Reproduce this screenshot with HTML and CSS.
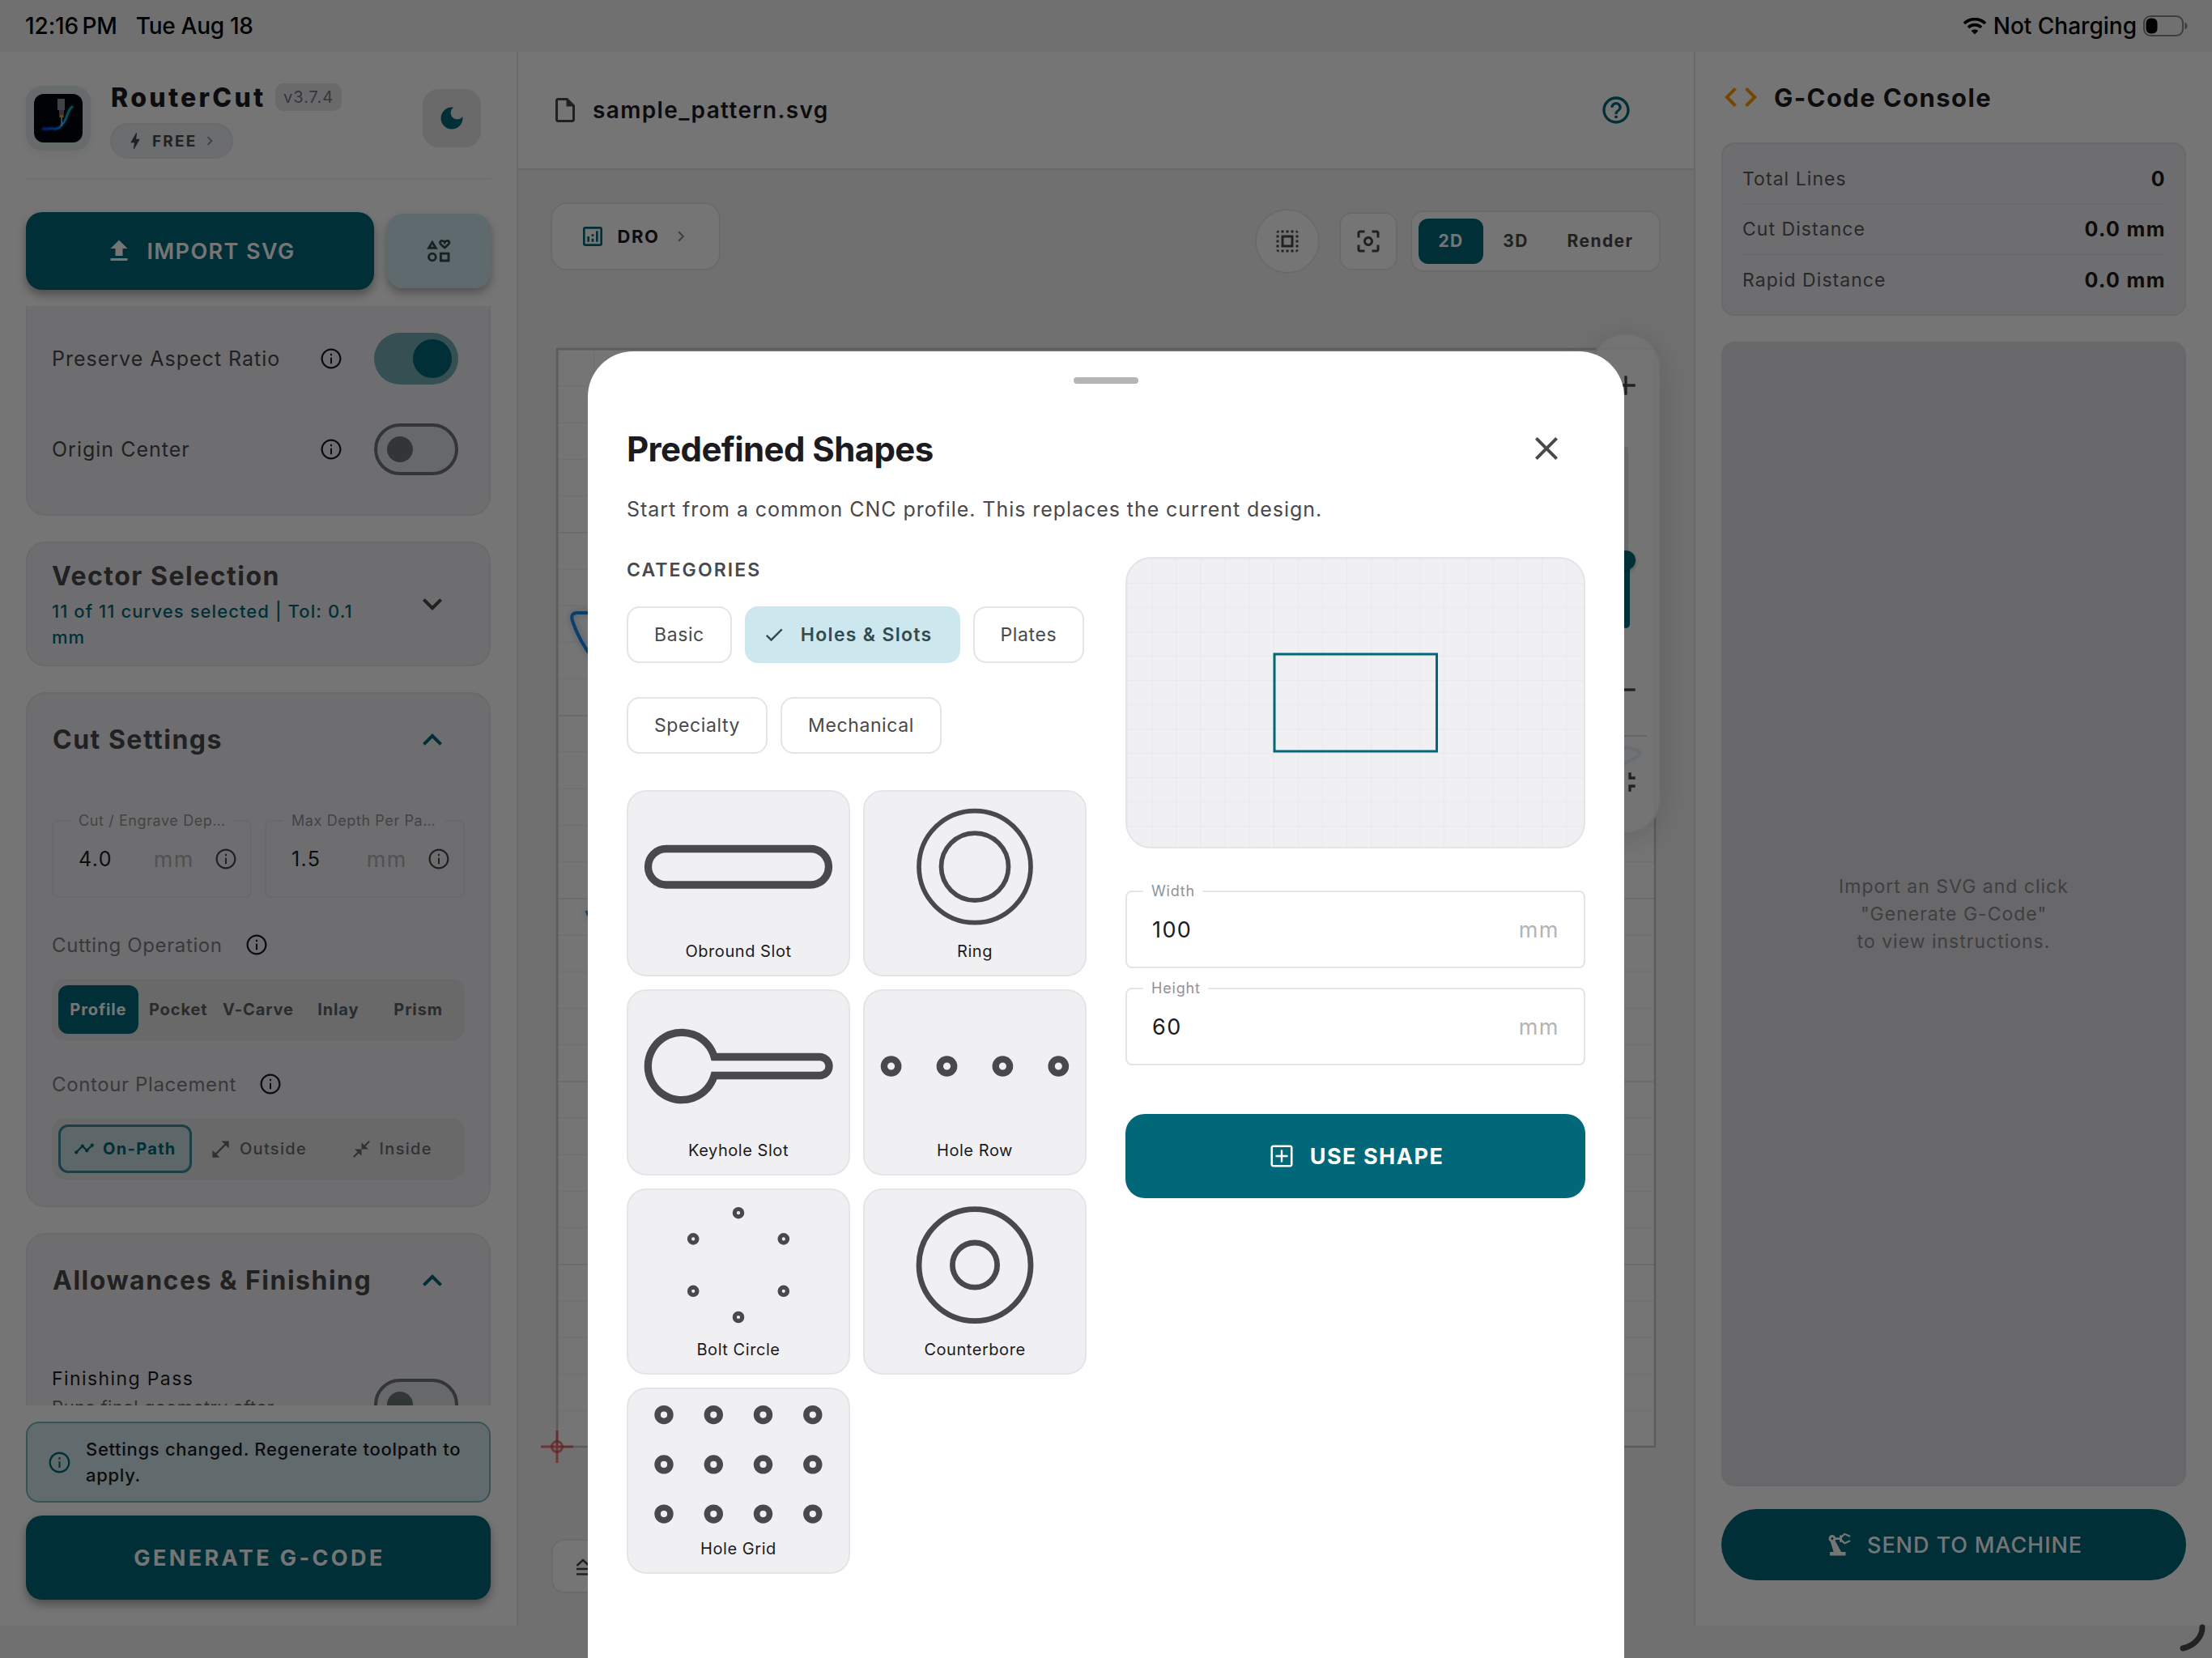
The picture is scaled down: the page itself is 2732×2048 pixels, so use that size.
FILE: index.html
```html
<!DOCTYPE html>
<html lang="en">
<head>
<meta charset="UTF-8">
<meta name="viewport" content="width=device-width, initial-scale=1.0">
<title>RouterCut</title>
<link rel="stylesheet" href="styles.css">
</head>
<body>

<!-- shared icons -->
<svg class="sprite" aria-hidden="true">
    <symbol id="info" viewBox="0 0 24 24"><path d="M11.2 7h1.6v2h-1.6zm0 4h1.6v6h-1.6zM12 2C6.48 2 2 6.48 2 12s4.48 10 10 10 10-4.48 10-10S17.52 2 12 2zm0 18.2c-4.5 0-8.2-3.7-8.2-8.2s3.7-8.2 8.2-8.2 8.2 3.7 8.2 8.2-3.7 8.2-8.2 8.2z"/></symbol>
    <symbol id="more" viewBox="0 0 24 24"><path d="M16.59 8.59L12 13.17 7.41 8.59 6 10l6 6 6-6z"/></symbol>
    <symbol id="less" viewBox="0 0 24 24"><path d="M12 8l-6 6 1.41 1.41L12 10.83l4.59 4.58L18 14z"/></symbol>
    <symbol id="right" viewBox="0 0 24 24"><path d="M10 6L8.59 7.41 13.17 12l-4.58 4.59L10 18l6-6z"/></symbol>
</svg>

<div class="app">
    <header class="status">
        <span class="status-time">12:16 PM</span>
        <span class="status-date">Tue Aug 18</span>
        <svg class="wifi" width="30" height="21" viewBox="0 0 30 21"><path d="M15 20.5l-4.3-4.6a6.2 6.2 0 0 1 8.6 0z"/><path class="wifi-arc" d="M6.9 11.9a11.6 11.6 0 0 1 16.2 0M2 7a18.6 18.6 0 0 1 26 0"/></svg>
        <span class="status-power">Not Charging</span>
        <svg class="battery" width="56" height="28" viewBox="0 0 56 28"><rect class="battery-case" x="1" y="2" width="48" height="24" rx="8"/><rect x="3.5" y="4.5" width="14" height="19" rx="6"/><path class="battery-nub" d="M51.5 9.5c4 2 4 7 0 9z"/></svg>
    </header>

    <aside class="sidebar">
        <div class="brand">
            <div class="logo">
                <svg width="60" height="60" viewBox="0 0 60 60">
                    <defs><linearGradient id="cut" x1="0" x2="1" y1="1" y2="0"><stop offset="0" stop-color="#0040ff"/><stop offset=".5" stop-color="#12b5e8"/><stop offset="1" stop-color="#00c88c"/></linearGradient></defs>
                    <rect width="60" height="60" rx="12" fill="#04060f"/>
                    <path d="M12 43c6 1 8-1 12 0 6 1 9-2 13-8s5-16 10-19" fill="none" stroke="#0a5fa8" stroke-opacity=".4" stroke-width="6" stroke-linecap="round"/>
                    <path d="M12 43c6 1 8-1 12 0 6 1 9-2 13-8s5-16 10-19" fill="none" stroke="url(#cut)" stroke-width="2.5" stroke-linecap="round"/>
                    <path d="M29 6h9v14h-9z" fill="#8b919c"/>
                    <path d="M31 20h6v6h-6z" fill="#6f7580"/>
                    <path d="M31.5 26h5v3h-5z" fill="#d9a520"/>
                    <path d="M33.3 29h1.6v11h-1.6z" fill="#b0b8c4"/>
                </svg>
            </div>
            <div class="brand-text">
                <div class="brand-row">
                    <span class="brand-name">RouterCut</span>
                    <span class="version">v3.7.4</span>
                </div>
                <div class="plan">
                    <svg width="26" height="26" viewBox="0 0 24 24"><path d="M11 21h-1l1-7H7.5c-.58 0-.57-.32-.38-.66C8.48 10.94 10.42 7.54 13 3h1l-1 7h3.5c.49 0 .56.33.47.51C12.96 17.55 11 21 11 21z"/></svg>
                    <span>FREE</span>
                    <svg class="muted" width="22" height="22"><use href="#right"/></svg>
                </div>
            </div>
            <button class="theme">
                <svg width="36" height="36" viewBox="0 0 24 24"><path d="M12 3c-4.97 0-9 4.03-9 9s4.03 9 9 9 9-4.03 9-9c0-.46-.04-.92-.1-1.36-.98 1.37-2.58 2.26-4.4 2.26-2.98 0-5.4-2.42-5.4-5.4 0-1.81.89-3.42 2.26-4.4-.44-.06-.9-.1-1.36-.1z"/></svg>
            </button>
        </div>

        <div class="import-row">
            <button class="import">
                <svg width="36" height="36" viewBox="0 0 24 24"><path d="M5 20h14v-2H5v2zm0-10h4v6h6v-6h4l-7-7-7 7z"/></svg>
                IMPORT SVG
            </button>
            <button class="shapes">
                <svg width="36" height="36" viewBox="0 0 24 24"><path d="M6.6 4.8L3.7 9.5h5.8zM16.8 9.3C14 7.2 13 6.3 13 5.2c0-1 .8-1.6 1.7-1.6s1.7.5 2.1 1.3c.4-.8 1.2-1.3 2.1-1.3s1.7.6 1.7 1.6c0 1.1-1 2-3.8 4.1zM13.6 14.1H20V20h-6.4z"/><circle cx="6.6" cy="17" r="2.9"/></svg>
            </button>
        </div>

        <div class="scroll">
            <section class="card card-cut">
                <div class="option">
                    <span>Preserve Aspect Ratio</span>
                    <svg class="info" width="30" height="30"><use href="#info"/></svg>
                    <div class="switch on"><i></i></div>
                </div>
                <div class="option">
                    <span>Origin Center</span>
                    <svg class="info" width="30" height="30"><use href="#info"/></svg>
                    <div class="switch"><i></i></div>
                </div>
            </section>

            <section class="card vector">
                <div class="vector-text">
                    <h2>Vector Selection</h2>
                    <p>11 of 11 curves selected | Tol: 0.1 mm</p>
                </div>
                <svg class="chevron" width="48" height="48"><use href="#more"/></svg>
            </section>

            <section class="card settings">
                <div class="card-head">
                    <h2>Cut Settings</h2>
                    <svg class="chevron teal" width="48" height="48"><use href="#less"/></svg>
                </div>
                <div class="fields">
                    <div class="field small">
                        <label>Cut / Engrave Dep…</label>
                        <span class="value">4.0</span>
                        <span class="unit">mm</span>
                        <svg class="info soft" width="30" height="30"><use href="#info"/></svg>
                    </div>
                    <div class="field small">
                        <label>Max Depth Per Pa…</label>
                        <span class="value">1.5</span>
                        <span class="unit">mm</span>
                        <svg class="info soft" width="30" height="30"><use href="#info"/></svg>
                    </div>
                </div>
                <div class="caption first">Cutting Operation <svg class="info" width="30" height="30"><use href="#info"/></svg></div>
                <div class="segments">
                    <span class="active">Profile</span>
                    <span>Pocket</span>
                    <span>V-Carve</span>
                    <span>Inlay</span>
                    <span>Prism</span>
                </div>
                <div class="caption">Contour Placement <svg class="info" width="30" height="30"><use href="#info"/></svg></div>
                <div class="segments placement">
                    <span class="active"><svg width="26" height="26" viewBox="0 0 24 24"><path d="M23 8c0 1.1-.9 2-2 2-.18 0-.35-.02-.51-.07l-3.56 3.55c.05.16.07.34.07.52 0 1.1-.9 2-2 2s-2-.9-2-2c0-.18.02-.36.07-.52l-2.55-2.55c-.16.05-.34.07-.52.07s-.36-.02-.52-.07l-4.55 4.56c.05.16.07.33.07.51 0 1.1-.9 2-2 2s-2-.9-2-2 .9-2 2-2c.18 0 .35.02.51.07l4.56-4.55C8.02 9.36 8 9.18 8 9c0-1.1.9-2 2-2s2 .9 2 2c0 .18-.02.36-.07.52l2.55 2.55c.16-.05.34-.07.52-.07s.36.02.52.07l3.55-3.56C19.02 8.35 19 8.18 19 8c0-1.1.9-2 2-2s2 .9 2 2z"/></svg>On-Path</span>
                    <span><svg width="27" height="27" viewBox="0 0 24 24"><path d="M21 11V3h-8l3.29 3.29-10 10L3 13v8h8l-3.29-3.29 10-10z"/></svg>Outside</span>
                    <span><svg width="25" height="25" viewBox="0 0 24 24"><path d="M22 3.41L16.71 8.7 20 12h-8V4l3.29 3.29L20.59 2 22 3.41zM3.41 22l5.29-5.29L12 20v-8H4l3.29 3.29L2 20.59 3.41 22z"/></svg>Inside</span>
                </div>
            </section>

            <section class="card settings">
                <div class="card-head">
                    <h2>Allowances &amp; Finishing</h2>
                    <svg class="chevron teal" width="48" height="48"><use href="#less"/></svg>
                </div>
                <div class="finishing">
                    <div>
                        <strong>Finishing Pass</strong>
                        <p>Runs final geometry after</p>
                    </div>
                    <div class="switch"><i></i></div>
                </div>
            </section>
        </div>

        <div class="notice">
            <svg width="31" height="31"><use href="#info"/></svg>
            <p>Settings changed. Regenerate toolpath to apply.</p>
        </div>
        <button class="generate">GENERATE G-CODE</button>
    </aside>

    <main class="main">
        <div class="file-bar">
            <svg width="36" height="36" viewBox="0 0 24 24"><path d="M14 2H6c-1.1 0-2 .9-2 2v16c0 1.1.9 2 2 2h12c1.1 0 2-.9 2-2V8l-6-6zM6 20V4h7v5h5v11H6z"/></svg>
            <span>sample_pattern.svg</span>
            <svg class="help" width="40" height="40" viewBox="0 0 24 24"><path d="M11 18h2v-2h-2v2zm1-16C6.48 2 2 6.48 2 12s4.48 10 10 10 10-4.48 10-10S17.52 2 12 2zm0 18c-4.41 0-8-3.59-8-8s3.59-8 8-8 8 3.59 8 8-3.59 8-8 8zm0-14c-2.21 0-4 1.79-4 4h2c0-1.1.9-2 2-2s2 .9 2 2c0 2-3 1.75-3 5h2c0-2.25 3-2.5 3-5 0-2.21-1.79-4-4-4z"/></svg>
        </div>

        <div class="workspace">
            <!-- stock sheet, 30 x 30 cells -->
            <svg class="sheet" width="1452" height="1798" viewBox="0 0 1452 1798">
                <defs>
                    <pattern id="minor" width="45.2" height="45.2" patternUnits="userSpaceOnUse" x="48" y="221"><path d="M0 0H45.2M0 0V45.2" stroke="#f3f3f4" stroke-width="3" fill="none"/></pattern>
                    <pattern id="major" width="226" height="226" patternUnits="userSpaceOnUse" x="48" y="221"><path d="M0 0H226M0 0V226" stroke="#e9e9eb" stroke-width="4" fill="none"/></pattern>
                </defs>
                <rect x="48" y="221" width="1356" height="1356" fill="#fff"/>
                <rect x="48" y="221" width="1356" height="1356" fill="url(#minor)"/>
                <rect x="48" y="221" width="1356" height="1356" fill="url(#major)"/>
                <rect x="48" y="221" width="1356" height="1356" fill="none" stroke="#c8c8ca" stroke-width="2.5"/>
                <g class="curves">
                    <path d="M92 547H73q-9 0-6 10 8 24 25 46M85 915q0 6 8 9M1340 714c24-2 44 0 45 6 0 6-16 10-34 22"/>
                </g>
                <g class="origin">
                    <path d="M28 1577h40M48 1557v40"/>
                    <circle cx="48" cy="1577" r="6.5"/>
                </g>
            </svg>

            <div class="toolbar">
                <button class="dro">
                    <svg class="teal" width="32" height="32" viewBox="0 0 24 24"><path d="M19 3H5c-1.1 0-2 .9-2 2v14c0 1.1.9 2 2 2h14c1.1 0 2-.9 2-2V5c0-1.1-.9-2-2-2zm0 16H5V5h14v14zM7 12h2v5H7zM15 7h2v10h-2zM11 14h2v3h-2zM11 10h2v2h-2z"/></svg>
                    <span>DRO</span>
                    <svg class="muted" width="26" height="26"><use href="#right"/></svg>
                </button>
                <div class="view-tools">
                    <button class="round">
                        <svg width="36" height="36" viewBox="0 0 24 24"><path d="M3 5h2V3c-1.1 0-2 .9-2 2zm0 8h2v-2H3v2zm4 8h2v-2H7v2zM3 9h2V7H3v2zm10-6h-2v2h2V3zm6 0v2h2c0-1.1-.9-2-2-2zM5 21v-2H3c0 1.1.9 2 2 2zm-2-4h2v-2H3v2zM9 3H7v2h2V3zm2 18h2v-2h-2v2zm8-8h2v-2h-2v2zm0 8c1.1 0 2-.9 2-2h-2v2zm0-12h2V7h-2v2zm0 8h2v-2h-2v2zm-4 4h2v-2h-2v2zm0-16h2V3h-2v2zM7 17h10V7H7v10zm2-8h6v6H9V9z"/></svg>
                    </button>
                    <button class="focus">
                        <svg width="36" height="36" viewBox="0 0 24 24"><path d="M5 15H3v4c0 1.1.9 2 2 2h4v-2H5v-4zM5 5h4V3H5c-1.1 0-2 .9-2 2v4h2V5zm14-2h-4v2h4v4h2V5c0-1.1-.9-2-2-2zm0 16h-4v2h4c1.1 0 2-.9 2-2v-4h-2v4zM12 8c-2.21 0-4 1.79-4 4s1.79 4 4 4 4-1.79 4-4-1.79-4-4-4zm0 6c-1.1 0-2-.9-2-2s.9-2 2-2 2 .9 2 2-.9 2-2 2z"/></svg>
                    </button>
                    <div class="view-mode">
                        <span class="active">2D</span>
                        <span>3D</span>
                        <span class="wide">Render</span>
                    </div>
                </div>
            </div>

            <div class="zoom">
                <svg width="40" height="40" viewBox="0 0 24 24"><path d="M19 13h-6v6h-2v-6H5v-2h6V5h2v6h6v2z"/></svg>
                <div class="slider"><i class="thumb"></i></div>
                <svg width="40" height="40" viewBox="0 0 24 24"><path d="M19 13H5v-2h14v2z"/></svg>
                <hr>
                <svg width="40" height="40" viewBox="0 0 24 24"><path d="M5 16h3v3h2v-5H5v2zm3-8H5v2h5V5H8v3zm6 11h2v-3h3v-2h-5v5zm2-11V5h-2v5h5V8h-3z"/></svg>
            </div>

            <div class="layers">
                <svg width="18" height="22" viewBox="0 0 18 22"><path d="M1.5 9L9 2l7.5 7M1 13h16M1 19.5h16"/></svg>
            </div>
        </div>
    </main>

    <aside class="console">
        <div class="console-head">
            <svg width="48" height="48" viewBox="0 0 24 24"><path d="M9.4 16.6L4.8 12l4.6-4.6L8 6l-6 6 6 6 1.4-1.4zm5.2 0l4.6-4.6-4.6-4.6L16 6l6 6-6 6-1.4-1.4z"/></svg>
            <h2>G-Code Console</h2>
        </div>
        <div class="stats">
            <div><span>Total Lines</span><b>0</b></div>
            <div><span>Cut Distance</span><b>0.0 mm</b></div>
            <div><span>Rapid Distance</span><b>0.0 mm</b></div>
        </div>
        <div class="output">Import an SVG and click<br>"Generate G-Code"<br>to view instructions.</div>
        <button class="send">
            <svg width="36" height="36" viewBox="0 0 24 24"><path d="M19.93 8.35l-3.6 1.68L14 7.7V6.3l2.33-2.33 3.6 1.68c.38.18.82.01 1-.36.18-.38.01-.82-.36-1L16.65 2.6c-.38-.18-.83-.1-1.13.2l-1.74 1.74c-.18-.24-.46-.39-.78-.39-.55 0-1 .45-1 1v1H8.82C8.34 4.65 6.98 3.73 5.4 4.07c-1.16.25-2.15 1.25-2.36 2.43-.22 1.32.46 2.47 1.48 3.08L7.08 18H4v3h13v-3h-3.62L8.41 8.77c.17-.24.31-.49.41-.77H12v1c0 .55.45 1 1 1 .32 0 .6-.16.78-.4l1.74 1.74c.3.3.75.38 1.13.2l3.92-1.83c.38-.18.54-.62.36-1-.18-.37-.62-.54-1-.36zM6 8c-.55 0-1-.45-1-1s.45-1 1-1 1 .45 1 1-.45 1-1 1z"/></svg>
            SEND TO MACHINE
        </button>
    </aside>

    <footer class="home-bar"></footer>
</div>

<div class="scrim"></div>
<svg class="corner" width="40" height="40" viewBox="0 0 40 40"><path d="M32 6C32 18 22 29 8 32"/></svg>

<section class="modal">
    <div class="handle"></div>
    <div class="modal-head">
        <h1>Predefined Shapes</h1>
        <svg width="48" height="48" viewBox="0 0 24 24"><path d="M19 6.41L17.59 5 12 10.59 6.41 5 5 6.41 10.59 12 5 17.59 6.41 19 12 13.41 17.59 19 19 17.59 13.41 12z"/></svg>
    </div>
    <p class="intro">Start from a common CNC profile. This replaces the current design.</p>

    <div class="modal-body">
        <div class="picker">
            <h3>CATEGORIES</h3>
            <div class="chips">
                <span class="chip">Basic</span>
                <span class="chip active"><svg width="28" height="28" viewBox="0 0 24 24"><path d="M9 16.17L4.83 12l-1.42 1.41L9 19 21 7l-1.41-1.41z"/></svg>Holes &amp; Slots</span>
                <span class="chip">Plates</span>
                <span class="chip">Specialty</span>
                <span class="chip">Mechanical</span>
            </div>
            <div class="tiles">
                <div class="tile">
                    <svg viewBox="0 0 272 183"><rect x="24.5" y="70.5" width="223" height="44.5" rx="22.2" stroke-width="9.3"/></svg>
                    <span>Obround Slot</span>
                </div>
                <div class="tile">
                    <svg viewBox="0 0 272 183" stroke-width="5.7"><circle cx="136" cy="92.6" r="69"/><circle cx="136" cy="92.6" r="41.5"/></svg>
                    <span>Ring</span>
                </div>
                <div class="tile">
                    <svg viewBox="0 0 272 183"><path stroke-width="9.3" d="M106.1 81.5A41.7 41.7 0 1 0 106.1 104.500H236.5A11.5 11.5 0 0 0 236.5 81.5Z"/></svg>
                    <span>Keyhole Slot</span>
                </div>
                <div class="tile">
                    <svg viewBox="0 0 272 183" stroke-width="8.3"><circle cx="32.6" cy="93" r="8.7"/><circle cx="101.5" cy="93" r="8.7"/><circle cx="170.4" cy="93" r="8.7"/><circle cx="239.3" cy="93" r="8.7"/></svg>
                    <span>Hole Row</span>
                </div>
                <div class="tile">
                    <svg viewBox="0 0 272 183" stroke-width="5.2"><circle cx="136" cy="28.2" r="4.7"/><circle cx="191.8" cy="60.4" r="4.7"/><circle cx="191.8" cy="124.8" r="4.7"/><circle cx="136" cy="157" r="4.7"/><circle cx="80.2" cy="124.8" r="4.7"/><circle cx="80.2" cy="60.4" r="4.7"/></svg>
                    <span>Bolt Circle</span>
                </div>
                <div class="tile">
                    <svg viewBox="0 0 272 183" stroke-width="6.8"><circle cx="136" cy="92.6" r="69"/><circle cx="136" cy="92.6" r="27.6"/></svg>
                    <span>Counterbore</span>
                </div>
                <div class="tile">
                    <svg viewBox="0 0 272 183" stroke-width="7.6">
                        <circle cx="44" cy="31.6" r="7.9"/><circle cx="105.3" cy="31.6" r="7.9"/><circle cx="166.5" cy="31.6" r="7.9"/><circle cx="227.8" cy="31.6" r="7.9"/>
                        <circle cx="44" cy="92.9" r="7.9"/><circle cx="105.3" cy="92.9" r="7.9"/><circle cx="166.5" cy="92.9" r="7.9"/><circle cx="227.8" cy="92.9" r="7.9"/>
                        <circle cx="44" cy="154.1" r="7.9"/><circle cx="105.3" cy="154.1" r="7.9"/><circle cx="166.5" cy="154.1" r="7.9"/><circle cx="227.8" cy="154.1" r="7.9"/>
                    </svg>
                    <span>Hole Grid</span>
                </div>
            </div>
        </div>

        <div class="details">
            <div class="preview">
                <svg width="564" height="356" viewBox="0 0 564 356">
                    <defs><pattern id="cells" width="30.1" height="30" patternUnits="userSpaceOnUse"><path d="M0 0H30.1M0 0V30" stroke="#e9eaec" stroke-width="2.4" fill="none"/></pattern></defs>
                    <rect width="564" height="356" fill="url(#cells)"/>
                    <rect x="182" y="118" width="200.5" height="120" fill="none" stroke="#006879" stroke-width="3"/>
                </svg>
            </div>
            <div class="field">
                <label>Width</label>
                <span class="value">100</span>
                <span class="unit">mm</span>
            </div>
            <div class="field">
                <label>Height</label>
                <span class="value">60</span>
                <span class="unit">mm</span>
            </div>
            <button class="use">
                <svg width="36" height="36" viewBox="0 0 24 24"><path d="M19 3H5c-1.1 0-2 .9-2 2v14c0 1.1.9 2 2 2h14c1.1 0 2-.9 2-2V5c0-1.1-.9-2-2-2zm.3 16.3H4.7V4.7h14.6v14.6zM11.2 17h1.6v-4.2H17v-1.6h-4.2V7h-1.6v4.2H7v1.6h4.2z"/></svg>
                USE SHAPE
            </button>
        </div>
    </div>
</section>

</body>
</html>
```

FILE: styles.css
```css
* {
    box-sizing: border-box;
}

body {
    margin: 0;
    width: 2732px;
    height: 2048px;
    position: relative;
    overflow: hidden;
    font-family: Inter, "Noto Sans", sans-serif;
    font-size: 24px;
    color: #1c1b1f;
    background: #f4f4f4;
}

h1, h2, h3, p {
    margin: 0;
}

button {
    font-family: inherit;
    color: inherit;
    padding: 0;
    margin: 0;
    border: none;
    display: flex;
    align-items: center;
    justify-content: center;
}

svg {
    display: block;
    flex: none;
    fill: currentColor;
}

.sprite {
    display: none;
}

.teal {
    color: #006879;
}

.muted {
    color: #8c8c8f;
}

.app {
    display: grid;
    grid-template-columns: 640px 1fr 640px;
    grid-template-rows: 64px 1944px 40px;
    height: 2048px;
}

/* status bar */
.status {
    grid-column: 1 / -1;
    position: relative;
    z-index: 3;
    display: flex;
    align-items: center;
    padding: 0 29px 0 31px;
    font-size: 28px;
    font-weight: 500;
    color: #000;
}

.status-time {
    letter-spacing: -0.1px;
    word-spacing: -3px;
}

.status-date {
    margin-left: 23px;
    letter-spacing: -0.3px;
    flex: 1;
}

.wifi {
    margin-right: 8px;
}

.wifi-arc {
    fill: none;
    stroke: #000;
    stroke-width: 3.8;
}

.status-power {
    margin-right: 8px;
}

.battery-case {
    fill: none;
    stroke: rgba(0, 0, 0, 0.45);
    stroke-width: 2;
}

.battery-nub {
    fill: rgba(0, 0, 0, 0.45);
}

/* sidebar */
.sidebar {
    background: #fff;
    border-right: 2px solid #e4e4e7;
    padding: 0 32px 32px;
    display: flex;
    flex-direction: column;
}

.brand {
    height: 158px;
    flex: none;
    padding-top: 39px;
    border-bottom: 2px solid #f6f6f7;
    display: flex;
    align-items: flex-start;
}

.logo {
    width: 80px;
    height: 80px;
    margin-top: 3px;
    padding: 10px;
    border-radius: 20px;
    background: #e2eaec;
    box-shadow: 0 4px 14px rgba(0, 0, 0, 0.06);
}

.brand-text {
    margin-left: 24px;
    flex: 1;
}

.brand-row {
    display: flex;
    align-items: center;
    height: 34px;
    margin-bottom: 15px;
}

.brand-name {
    font-size: 32px;
    font-weight: 800;
    letter-spacing: 3.3px;
    width: 204px;
    padding-left: 1px;
}

.version {
    height: 34px;
    line-height: 34px;
    padding: 0 10px;
    width: 82px;
    border-radius: 10px;
    background: #e8e8eb;
    font-size: 20px;
    letter-spacing: 1px;
    color: #77777a;
}

.plan {
    width: 152px;
    height: 44px;
    padding: 0 16px;
    border: 2px solid #e6e7ea;
    border-radius: 22px;
    background: #ebedf0;
    color: #49494b;
    display: flex;
    align-items: center;
    font-size: 19px;
    font-weight: 700;
    letter-spacing: 2.2px;
}

.plan span {
    width: 60px;
    margin-left: 8px;
}

.theme {
    width: 72px;
    height: 72px;
    margin: 7px 12px 0 0;
    border: 2px solid #e6e6e9;
    border-radius: 20px;
    background: #e7e7ea;
    color: #006879;
}

.import-row {
    display: flex;
    align-items: center;
    gap: 16px;
    margin-top: 40px;
    height: 96px;
    flex: none;
}

.import {
    width: 430px;
    height: 96px;
    gap: 16px;
    border-radius: 20px;
    background: #006879;
    color: #fff;
    font-size: 27px;
    font-weight: 600;
    letter-spacing: 1.4px;
    box-shadow: 0 6px 12px rgba(0, 0, 0, 0.34);
}

.shapes {
    width: 128px;
    height: 92px;
    border-radius: 20px;
    background: #cde7ee;
    color: #334b50;
    box-shadow: 0 6px 12px rgba(0, 0, 0, 0.3);
}

.shapes svg {
    fill: none;
    stroke: currentColor;
    stroke-width: 1.9;
}

.scroll {
    margin-top: 20px;
    height: 1358px;
    flex: none;
    overflow: hidden;
    display: flex;
    flex-direction: column;
    gap: 32px;
}

.card {
    flex: none;
    border: 2px solid #e6e6e9;
    border-radius: 24px;
    background: #f0f0f3;
    padding: 0 30px;
}

.card h2 {
    font-size: 32px;
    font-weight: 700;
    letter-spacing: 1.5px;
    line-height: 40px;
    color: #49494b;
}

.card-cut {
    height: 259px;
    padding-top: 9px;
    border-top: none;
    border-radius: 0 0 24px 24px;
}

.option {
    height: 112px;
    display: flex;
    align-items: center;
    padding-right: 8px;
    font-size: 25px;
    letter-spacing: 1px;
    color: #49494b;
}

.option span {
    flex: 1;
}

.option .switch {
    margin-left: 38px;
}

.info {
    color: #1c1b1f;
}

.info.soft {
    color: #49494b;
}

.switch {
    width: 104px;
    height: 64px;
    flex: none;
    border: 4px solid #6f7677;
    border-radius: 32px;
    background: #dfe3e6;
    padding: 12px;
}

.switch i {
    display: block;
    width: 32px;
    height: 32px;
    border-radius: 50%;
    background: #6f7677;
}

.switch.on {
    border: none;
    background: #76acb5;
    padding: 8px;
}

.switch.on i {
    width: 48px;
    height: 48px;
    margin-left: auto;
    background: #006879;
}

.vector {
    height: 154px;
    display: flex;
    align-items: center;
    justify-content: space-between;
}

.vector-text {
    width: 400px;
    padding-top: 2px;
}

.vector p {
    margin-top: 7px;
    font-size: 22px;
    font-weight: 500;
    line-height: 32px;
    letter-spacing: 1.08px;
    color: #006879;
}

.chevron {
    margin-right: 16px;
}

.vector .chevron {
    color: #49494b;
}

.card-head {
    height: 114px;
    display: flex;
    align-items: center;
    justify-content: space-between;
}

.settings {
    padding-bottom: 32px;
}

.settings h2 {
    padding-left: 1px;
}

.fields {
    display: grid;
    grid-template-columns: 1fr 1fr;
    gap: 16px;
    margin-top: 42px;
}

.field {
    position: relative;
    height: 96px;
    border: 2px solid #e4e4e9;
    border-radius: 8px;
    padding: 0 30px 0 31px;
    display: flex;
    align-items: center;
}

.field label {
    position: absolute;
    left: 20px;
    top: -13px;
    padding: 0 9px 0 10px;
    line-height: 24px;
    font-size: 18px;
    letter-spacing: 0.8px;
    white-space: nowrap;
    color: #929294;
    background: #fff;
}

.value {
    flex: 1;
    font-size: 27px;
    letter-spacing: 1.4px;
}

.unit {
    font-size: 27px;
    letter-spacing: 1.5px;
    color: #b4b4b6;
}

.field.small {
    padding-right: 15px;
}

.field.small label {
    width: 200px;
    padding-left: 11px;
    letter-spacing: 0.6px;
    background: #f0f0f3;
}

.field.small .value {
    font-size: 25px;
}

.field.small .unit {
    margin-right: 24px;
}

.caption {
    display: flex;
    align-items: center;
    gap: 27px;
    height: 30px;
    margin: 39px 0 27px;
    letter-spacing: 0.62px;
    color: #7d7d80;
}

.caption.first {
    margin-top: 43px;
}

.segments {
    height: 76px;
    padding: 8px;
    border-radius: 16px;
    background: #e4e4e7;
    display: grid;
    grid-template-columns: repeat(5, 1fr);
    font-size: 20px;
    font-weight: 700;
    letter-spacing: 0.9px;
    color: #5f5f62;
}

.segments span {
    display: flex;
    align-items: center;
    justify-content: center;
    border-radius: 12px;
}

.segments .active {
    background: #006879;
    color: #fff;
}

.placement {
    grid-template-columns: repeat(3, 1fr);
    font-weight: 500;
    letter-spacing: 1.3px;
    color: #6c6c6f;
}

.placement span {
    gap: 10px;
}

.placement .active {
    border: 3px solid #3d8b98;
    background: #cbdfe5;
    color: #006879;
    font-weight: 700;
}

.finishing {
    display: flex;
    justify-content: space-between;
    padding-right: 8px;
    margin-top: 48px;
}

.finishing strong {
    display: block;
    font-size: 23px;
    font-weight: 400;
    line-height: 32px;
    letter-spacing: 1.4px;
}

.finishing p {
    margin-top: 4px;
    font-size: 22px;
    line-height: 30px;
    letter-spacing: 0.5px;
    color: #6c6c6f;
}

.finishing .switch {
    margin-top: 16px;
}

.notice {
    height: 100px;
    flex: none;
    margin-top: 20px;
    padding: 0 20px 0 24px;
    border: 2px solid #7db3bc;
    border-radius: 16px;
    background: #d4e8eb;
    display: flex;
    align-items: center;
    gap: 17px;
    font-size: 22px;
    font-weight: 500;
    line-height: 32px;
    letter-spacing: 0.7px;
}

.notice svg {
    color: #006879;
}

.generate {
    height: 104px;
    flex: none;
    margin-top: 16px;
    padding-left: 3px;
    border-radius: 20px;
    background: #006879;
    color: #fff;
    font-size: 27px;
    font-weight: 700;
    letter-spacing: 3.4px;
    box-shadow: 0 6px 12px rgba(0, 0, 0, 0.34);
}

/* canvas */
.main {
    display: flex;
    flex-direction: column;
}

.file-bar {
    height: 146px;
    flex: none;
    background: #fff;
    border-bottom: 2px solid #e2e2e5;
    padding: 0 76px 0 40px;
    display: flex;
    align-items: center;
    gap: 16px;
    font-size: 28px;
    font-weight: 600;
    letter-spacing: 1.35px;
}

.file-bar svg {
    color: #49494b;
}

.file-bar .help {
    margin-left: auto;
    color: #006879;
}

.workspace {
    flex: 1;
    position: relative;
    padding: 40px 41px 0 40px;
}

.sheet {
    position: absolute;
    left: 0;
    top: 0;
}

.curves {
    fill: none;
    stroke: #1e88e5;
    stroke-width: 4;
    filter: drop-shadow(0 0 4px rgba(30, 136, 229, 0.5));
}

.origin {
    fill: none;
    stroke: #e53935;
    stroke-opacity: 0.65;
    stroke-width: 3;
}

.toolbar {
    position: relative;
    display: flex;
    justify-content: space-between;
    align-items: flex-start;
}

.dro {
    width: 210px;
    height: 84px;
    border: 2px solid #e8e8ea;
    border-radius: 20px;
    background: #fff;
    font-size: 22px;
    font-weight: 700;
    letter-spacing: 1.5px;
}

.dro span {
    margin: 0 14px 0 15px;
}

.view-tools {
    display: flex;
    align-items: center;
    padding-top: 8px;
    color: #49494b;
}

.round, .focus {
    border: 2px solid #e8e8ea;
    background: #fff;
}

.round {
    width: 80px;
    height: 80px;
    border-radius: 50%;
    margin-right: 24px;
}

.focus {
    width: 72px;
    height: 72px;
    border-radius: 16px;
    margin-right: 16px;
}

.view-mode {
    height: 76px;
    padding: 8px;
    border: 2px solid #e8e8ea;
    border-radius: 16px;
    background: #fff;
    display: flex;
    font-size: 21px;
    font-weight: 700;
    letter-spacing: 1.4px;
}

.view-mode span {
    width: 80px;
    line-height: 56px;
    border-radius: 12px;
    text-align: center;
}

.view-mode .wide {
    width: 129px;
}

.view-mode .active {
    background: #006879;
    color: #fff;
}

/* floats over the sheet */
.zoom {
    position: absolute;
    right: 41px;
    top: 201px;
    width: 86px;
    height: 619px;
    padding-top: 43px;
    border: 2px solid #ececee;
    border-radius: 43px;
    background: rgba(252, 252, 252, 0.88);
    box-shadow: 0 8px 40px rgba(0, 0, 0, 0.15);
    display: flex;
    flex-direction: column;
    align-items: center;
    color: #49494b;
}

.slider {
    width: 10px;
    height: 224px;
    margin: 56px 0;
    display: flex;
    flex-direction: column;
    align-items: center;
    position: relative;
}

.slider::before {
    content: "";
    width: 6px;
    height: 140px;
    border-radius: 3px;
    background: #dfe3e6;
}

.slider::after {
    content: "";
    width: 10px;
    height: 84px;
    border-radius: 0 0 5px 5px;
    background: #006879;
}

.thumb {
    position: absolute;
    left: -7px;
    top: 128px;
    width: 24px;
    height: 24px;
    border-radius: 50%;
    background: #006879;
    box-shadow: 0 2px 4px rgba(0, 0, 0, 0.3);
}

.zoom hr {
    width: 52px;
    height: 2px;
    margin: 36px 0;
    border: none;
    background: #dcdcdf;
}

.layers {
    position: absolute;
    left: 41px;
    top: 1691px;
    width: 200px;
    height: 67px;
    padding: 22px 28px;
    border: 2px solid #e8e8ea;
    border-radius: 16px;
    background: #fff;
}

.layers svg {
    fill: none;
    stroke: #49494b;
    stroke-width: 2.6;
}

/* console */
.console {
    background: #fff;
    border-left: 2px solid #e4e4e7;
    padding: 32px 32px 56px;
    display: flex;
    flex-direction: column;
}

.console-head {
    display: flex;
    align-items: center;
    gap: 17px;
    margin-bottom: 32px;
}

.console-head svg {
    color: #ff9800;
}

.console-head h2 {
    font-size: 31px;
    font-weight: 700;
    letter-spacing: 1.4px;
}

.stats {
    height: 214px;
    padding: 13px 24px;
    border: 2px solid #e4e4e7;
    border-radius: 16px;
    background: #f0f0f3;
}

.stats div {
    height: 62px;
    border-bottom: 2px solid #e8e8eb;
    display: flex;
    align-items: center;
    justify-content: space-between;
}

.stats div:last-child {
    border-bottom: none;
}

.stats span {
    font-size: 23px;
    letter-spacing: 1.05px;
    color: #5a5a5c;
}

.stats b {
    font-size: 25px;
    letter-spacing: 1.4px;
    margin-right: -1px;
}

.output {
    flex: 1;
    margin: 32px 0 28px;
    border-radius: 16px;
    background: #e3e3e6;
    display: flex;
    align-items: center;
    justify-content: center;
    text-align: center;
    font-size: 23px;
    line-height: 34px;
    letter-spacing: 1px;
    color: #8a8a8d;
}

.send {
    height: 88px;
    border-radius: 44px;
    gap: 16px;
    background: #006879;
    color: #fff;
    font-size: 27px;
    font-weight: 500;
    letter-spacing: 0.9px;
}

.home-bar {
    grid-column: 1 / -1;
}

.scrim {
    position: absolute;
    inset: 0;
    background: rgba(0, 0, 0, 0.54);
    z-index: 1;
}

.corner {
    position: absolute;
    right: 4px;
    bottom: 4px;
    z-index: 2;
    fill: none;
    stroke: #222;
    stroke-width: 7;
    stroke-linecap: round;
}

/* shape picker sheet */
.modal {
    position: absolute;
    left: 726px;
    top: 434px;
    width: 1280px;
    height: 1614px;
    padding: 32px 48px 0;
    border-radius: 56px 56px 0 0;
    background: #fff;
    z-index: 2;
}

.handle {
    width: 80px;
    height: 8px;
    margin: 0 auto;
    border-radius: 4px;
    background: #b5b5b5;
}

.modal-head {
    height: 48px;
    margin-top: 56px;
    padding-right: 24px;
    display: flex;
    align-items: center;
    justify-content: space-between;
}

.modal-head svg {
    color: #49494b;
}

.modal h1 {
    font-size: 42px;
    font-weight: 700;
    letter-spacing: -0.6px;
}

.intro {
    margin-top: 35px;
    line-height: 32px;
    font-size: 25px;
    letter-spacing: 0.94px;
    color: #49494b;
}

.modal-body {
    margin-top: 43px;
    display: grid;
    grid-template-columns: 568px 568px;
    gap: 48px;
}

.picker h3 {
    font-size: 23px;
    font-weight: 600;
    line-height: 32px;
    letter-spacing: 2.1px;
    color: #49494b;
}

.chips {
    margin: 29px -20px 45px 0;
    display: flex;
    flex-wrap: wrap;
    gap: 42px 16px;
}

.chip {
    height: 70px;
    padding: 0 32px;
    border: 2px solid #e4e4e9;
    border-radius: 16px;
    display: flex;
    align-items: center;
    font-size: 23px;
    letter-spacing: 0.6px;
    color: #49494b;
}

.chip.active {
    border-color: #cde7ee;
    padding: 0 32px 0 20px;
    background: #cde7ee;
    color: #334b50;
    font-weight: 600;
    letter-spacing: 1.3px;
}

.chip svg {
    margin-right: 19px;
}

.tiles {
    display: grid;
    grid-template-columns: 276px 276px;
    gap: 16px;
}

.tile {
    height: 230px;
    border: 2px solid #e4e4e9;
    border-radius: 24px;
    background: #f0f0f3;
    text-align: center;
    font-size: 20px;
    line-height: 28px;
    letter-spacing: 0.55px;
}

.tile svg {
    width: 272px;
    height: 183px;
    fill: none;
    stroke: #49494b;
}

.preview {
    height: 360px;
    margin-bottom: 52px;
    border: 2px solid #e4e4e9;
    border-radius: 32px;
    background: #f0f0f3;
    overflow: hidden;
}

.details .field {
    margin-bottom: 24px;
}

.use {
    width: 100%;
    height: 104px;
    margin-top: 60px;
    gap: 17px;
    border-radius: 24px;
    background: #006879;
    color: #fff;
    font-size: 27px;
    font-weight: 700;
    letter-spacing: 1.5px;
}
```
